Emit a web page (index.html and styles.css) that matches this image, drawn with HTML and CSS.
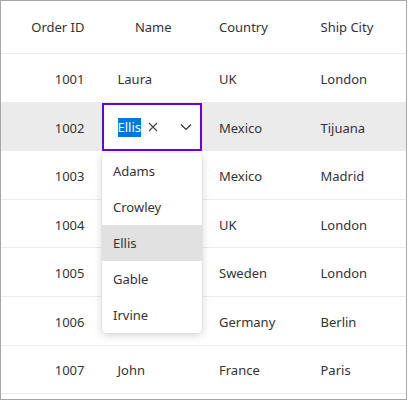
FILE: index.html
```html
<!DOCTYPE html>
<html>
<head>
<meta charset="utf-8">
<link rel="stylesheet" href="styles.css">
</head>
<body>
<div class="grid">
  <div class="row head">
    <div class="cell num">Order ID</div>
    <div class="cell center">Name</div>
    <div class="cell">Country</div>
    <div class="cell">Ship City</div>
  </div>
  <div class="row">
    <div class="cell num">1001</div>
    <div class="cell">Laura</div>
    <div class="cell">UK</div>
    <div class="cell">London</div>
  </div>
  <div class="row active">
    <div class="cell num">1002</div>
    <div class="cell edit-cell">
      <div class="editor">
        <span class="sel">Ellis</span>
        <svg class="clear" width="10" height="10" viewBox="0 0 10 10"><path d="M1 1 L9 9 M9 1 L1 9" stroke="#444" stroke-width="1.1" fill="none"/></svg>
        <svg class="chev" width="12" height="8" viewBox="0 0 12 8"><path d="M1 1.5 L6 6.5 L11 1.5" stroke="#333" stroke-width="1.2" fill="none"/></svg>
      </div>
    </div>
    <div class="cell">Mexico</div>
    <div class="cell">Tijuana</div>
  </div>
  <div class="row">
    <div class="cell num">1003</div>
    <div class="cell"></div>
    <div class="cell">Mexico</div>
    <div class="cell">Madrid</div>
  </div>
  <div class="row">
    <div class="cell num">1004</div>
    <div class="cell"></div>
    <div class="cell">UK</div>
    <div class="cell">London</div>
  </div>
  <div class="row">
    <div class="cell num">1005</div>
    <div class="cell"></div>
    <div class="cell">Sweden</div>
    <div class="cell">London</div>
  </div>
  <div class="row">
    <div class="cell num">1006</div>
    <div class="cell"></div>
    <div class="cell">Germany</div>
    <div class="cell">Berlin</div>
  </div>
  <div class="row">
    <div class="cell num">1007</div>
    <div class="cell">John</div>
    <div class="cell">France</div>
    <div class="cell">Paris</div>
  </div>
  <div class="popup">
    <div class="item">Adams</div>
    <div class="item">Crowley</div>
    <div class="item hl">Ellis</div>
    <div class="item">Gable</div>
    <div class="item">Irvine</div>
  </div>
</div>
</body>
</html>
```
FILE: styles.css
```css
* { box-sizing: border-box; }
html, body { margin: 0; padding: 0; background: #fff; }
body {
  font-family: "Noto Sans", "Open Sans", sans-serif;
  font-size: 13px;
  color: #333;
}
.grid {
  position: relative;
  width: 407px;
  height: 400px;
  border: 1px solid #a6a6a6;
  overflow: hidden;
}
.row {
  display: grid;
  grid-template-columns: 101.5px 101.5px 101.5px 1fr;
  height: 48.6px;
  border-bottom: 1px solid #ececec;
}
.row.head { height: 53px; }
.row.head .cell { padding-top: 0; }
.row.active { background: #ebebeb; }
.cell {
  display: flex;
  align-items: center;
  padding: 2px 15px 0;
  white-space: nowrap;
}
.cell.num { justify-content: flex-end; padding-right: 18px; }
.cell.center { justify-content: center; }
.edit-cell { padding: 0; }
.editor {
  width: 100px;
  height: 48px;
  margin-left: -1px;
  border: 2px solid #6300ea;
  background: #fff;
  display: flex;
  align-items: center;
  padding: 1px 0 0 14px;
}
.sel {
  background: #0078d7;
  color: #fff;
  line-height: 19px;
}
.clear { margin-left: 7px; }
.chev { margin-left: 22px; }
.popup {
  position: absolute;
  left: 101px;
  top: 152px;
  width: 100px;
  background: #fff;
  border-radius: 4px;
  box-shadow: 0 2px 8px rgba(0,0,0,0.18), 0 0 1px rgba(0,0,0,0.2);
  overflow: hidden;
}
.item {
  height: 36px;
  display: flex;
  align-items: center;
  padding: 0 0 0 11px;
}
.item.hl { background: #e1e1e1; }
```
